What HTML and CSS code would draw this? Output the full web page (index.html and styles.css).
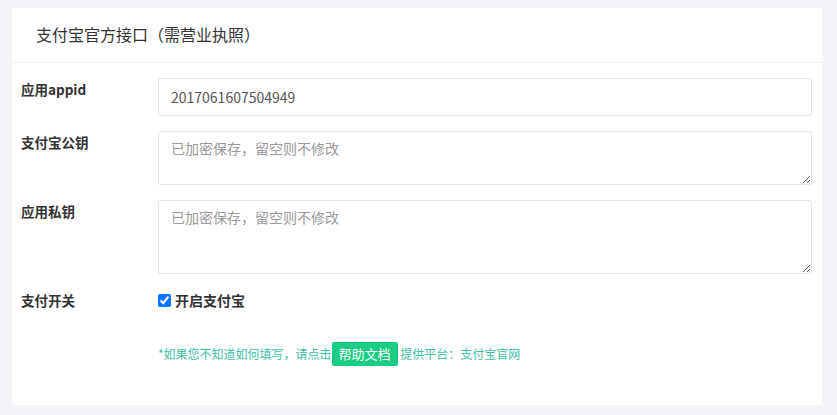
FILE: index.html
```html
<!DOCTYPE html>
<html lang="zh-CN">
<head>
  <meta charset="UTF-8">
  <meta name="viewport" content="width=device-width, initial-scale=1.0">
  <title>支付宝官方接口</title>
  <link rel="stylesheet" href="styles.css">
</head>
<body>
  <div class="box">
    <div class="box-title">支付宝官方接口（需营业执照）</div>
    <form class="box-content">
      <div class="form-row">
        <label class="control-label">应用appid</label>
        <div class="control">
          <input class="form-control" type="text" value="2017061607504949">
        </div>
      </div>
      <div class="form-row">
        <label class="control-label">支付宝公钥</label>
        <div class="control">
          <textarea class="form-control area-sm" placeholder="已加密保存，留空则不修改"></textarea>
        </div>
      </div>
      <div class="form-row">
        <label class="control-label">应用私钥</label>
        <div class="control">
          <textarea class="form-control area-lg" placeholder="已加密保存，留空则不修改"></textarea>
        </div>
      </div>
      <div class="form-row">
        <label class="control-label">支付开关</label>
        <div class="control">
          <label class="check"><input type="checkbox" checked> 开启支付宝</label>
        </div>
      </div>
      <div class="form-row help-row">
        <div class="control-label"></div>
        <div class="control help">
          *如果您不知道如何填写，请点击<a class="btn-help" href="#">帮助文档</a> 提供平台：支付宝官网
        </div>
      </div>
    </form>
  </div>
</body>
</html>
```

FILE: styles.css
```css
html, body {
  margin: 0;
  padding: 0;
}

body {
  background-color: #f3f4f8;
  color: #333;
  font-family: "Noto Sans CJK SC", "Noto Sans", sans-serif;
  font-size: 14px;
  padding: 8px 15px 10px 12px;
}

.box {
  background: #fff;
  width: 810px;
}

.box-title {
  height: 54px;
  line-height: 52px;
  padding-left: 24px;
  font-size: 16px;
  color: #333;
  border-bottom: 1px solid #f0f0f2;
}

.box-content {
  margin: 0;
  padding: 15px 10px 39px 9px;
}

.form-row {
  display: flex;
  margin-bottom: 15px;
}

.control-label {
  width: 137px;
  flex: none;
  padding-top: 1px;
  line-height: 20px;
  font-size: 13.5px;
  font-weight: 700;
  color: #333;
}

.control {
  flex: 1;
}

.form-control {
  display: block;
  box-sizing: border-box;
  width: 100%;
  margin: 0;
  border: 1px solid #e5e6e7;
  border-radius: 2px;
  font-family: inherit;
  font-size: 14px;
  color: #555;
  outline: none;
}

input.form-control {
  height: 38px;
  padding: 0 12px;
}

textarea.form-control {
  padding: 6px 12px;
  line-height: 20px;
  resize: vertical;
}

textarea.form-control::placeholder {
  color: #999;
}

.area-sm {
  height: 54px;
}

.area-lg {
  height: 74px;
}

.check {
  display: flex;
  align-items: center;
  line-height: 22px;
  font-weight: 700;
  font-size: 14px;
}

.check input {
  width: 13px;
  height: 13px;
  margin: 0 4px 0 0;
}

.help-row {
  margin: 31px 0 0;
}

.help {
  font-size: 12px;
  line-height: 24px;
  color: #3cc0a4;
}

.btn-help {
  display: inline-block;
  height: 24px;
  padding: 0 7px;
  border-radius: 2px;
  background: #1bcc84;
  color: #fff;
  font-size: 13px;
  line-height: 24px;
  text-decoration: none;
  vertical-align: top;
}
```
